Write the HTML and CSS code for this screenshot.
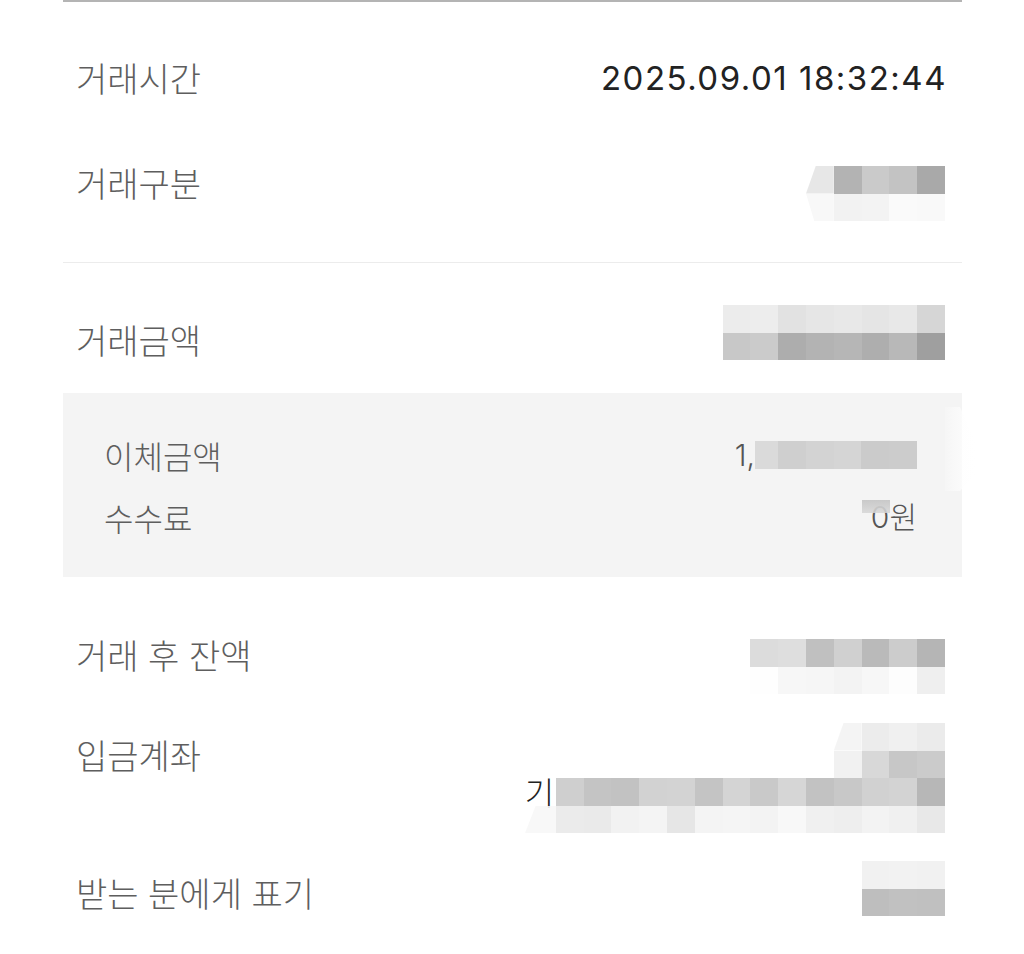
FILE: index.html
```html
<!DOCTYPE html>
<html lang="ko">
<head>
<meta charset="utf-8">
<link rel="stylesheet" href="styles.css">
</head>
<body>
<div class="page">
  <section class="sec sec1">
    <div class="row r1">
      <span class="label">거래시간</span>
      <span class="value date">2025.09.01 18:32:44</span>
    </div>
    <div class="row r2">
      <span class="label">거래구분</span>
      <div class="mosaic m5">
        <i class="smear" style="background:#e4e4e4"></i><i style="background:#b3b3b3"></i><i style="background:#cacaca"></i><i style="background:#c3c3c3"></i><i style="background:#a9a9a9"></i>
        <i class="smear2" style="background:#f8f8f8"></i><i style="background:#f2f2f2"></i><i style="background:#f3f3f3"></i><i style="background:#fafafa"></i><i style="background:#f9f9f9"></i>
      </div>
    </div>
  </section>
  <section class="sec sec2">
    <div class="row r3">
      <span class="label">거래금액</span>
      <div class="mosaic m8">
        <i style="background:#ececec"></i><i style="background:#ededed"></i><i style="background:#e2e2e2"></i><i style="background:#e6e6e6"></i><i style="background:#e8e8e8"></i><i style="background:#e5e5e5"></i><i style="background:#e8e8e8"></i><i style="background:#d6d6d6"></i>
        <i style="background:#c8c8c8"></i><i style="background:#cbcbcb"></i><i style="background:#adadad"></i><i style="background:#b3b3b3"></i><i style="background:#b6b6b6"></i><i style="background:#aeaeae"></i><i style="background:#b8b8b8"></i><i style="background:#9f9f9f"></i>
      </div>
    </div>
    <div class="box">
      <div class="subrow">
        <span class="sublabel">이체금액</span>
        <div class="subvalue">
          <span class="subtext">1,</span>
          <div class="mosaic m6">
            <i style="background:#dadada"></i><i style="background:#cfcfcf"></i><i style="background:#d3d3d3"></i><i style="background:#d5d5d5"></i><i style="background:#cbcbcb"></i><i style="background:#cccccc"></i>
          </div>
        </div>
      </div>
      <div class="subrow">
        <span class="sublabel">수수료</span>
        <div class="subvalue fee">
          <span class="subtext">0원</span>
          <i class="fee-blot"></i>
        </div>
      </div>
      <i class="box-smear"></i>
    </div>
  </section>
  <section class="sec sec3">
    <div class="row r4">
      <span class="label">거래 후 잔액</span>
      <div class="mosaic m7">
        <i style="background:#dcdcdc"></i><i style="background:#dedede"></i><i style="background:#c0c0c0"></i><i style="background:#d0d0d0"></i><i style="background:#bababa"></i><i style="background:#cccccc"></i><i style="background:#b5b5b5"></i>
        <i style="background:#fefefe"></i><i style="background:#f7f7f7"></i><i style="background:#f6f6f6"></i><i style="background:#f3f3f3"></i><i style="background:#f7f7f7"></i><i style="background:#fdfdfd"></i><i style="background:#efefef"></i>
      </div>
    </div>
    <div class="row r5">
      <span class="label">입금계좌</span>
      <div class="mosaic acct">
        <i></i><i></i><i></i><i></i><i></i><i></i><i></i><i></i><i></i><i></i><i></i><i class="smear" style="background:#f3f3f3"></i><i style="background:#ececec"></i><i style="background:#f0f0f0"></i><i style="background:#ebebeb"></i>
        <i></i><i></i><i></i><i></i><i></i><i></i><i></i><i></i><i></i><i></i><i></i><i style="background:#f1f1f1"></i><i style="background:#d8d8d8"></i><i style="background:#c7c7c7"></i><i style="background:#cbcbcb"></i>
        <span class="acct-text">기</span><i style="background:#cfcfcf"></i><i style="background:#c4c4c4"></i><i style="background:#c2c2c2"></i><i style="background:#d2d2d2"></i><i style="background:#d3d3d3"></i><i style="background:#c4c4c4"></i><i style="background:#d4d4d4"></i><i style="background:#c9c9c9"></i><i style="background:#d6d6d6"></i><i style="background:#c2c2c2"></i><i style="background:#c8c8c8"></i><i style="background:#d1d1d1"></i><i style="background:#d3d3d3"></i><i style="background:#b7b7b7"></i>
        <i class="smear" style="background:#f7f7f7"></i><i style="background:#ebebeb"></i><i style="background:#eaeaea"></i><i style="background:#f2f2f2"></i><i style="background:#f4f4f4"></i><i style="background:#e6e6e6"></i><i style="background:#f4f4f4"></i><i style="background:#f5f5f5"></i><i style="background:#f3f3f3"></i><i style="background:#f8f8f8"></i><i style="background:#f0f0f0"></i><i style="background:#eeeeee"></i><i style="background:#f3f3f3"></i><i style="background:#f0f0f0"></i><i style="background:#e8e8e8"></i>
      </div>
    </div>
    <div class="row r6">
      <span class="label">받는 분에게 표기</span>
      <div class="mosaic m3">
        <i style="background:#f1f1f1"></i><i style="background:#f2f2f2"></i><i style="background:#f1f1f1"></i>
        <i style="background:#bebebe"></i><i style="background:#c1c1c1"></i><i style="background:#c0c0c0"></i>
      </div>
    </div>
  </section>
</div>
</body>
</html>
```
FILE: styles.css
```css
html, body {
  margin: 0;
  padding: 0;
  background: #ffffff;
}
body {
  font-family: "Noto Sans CJK KR", "Noto Sans", sans-serif;
  width: 1024px;
  height: 954px;
  overflow: hidden;
}
.page {
  width: 899px;
  margin-left: 63px;
  border-top: 2px solid #b4b4b4;
}
.sec1 {
  padding-top: 24px;
  padding-bottom: 26px;
  border-bottom: 1px solid #ececec;
}
.sec2 {
  padding-top: 25px;
}
.sec3 {
  padding-top: 26px;
}
.row {
  display: flex;
  justify-content: space-between;
  align-items: flex-start;
  padding: 0 17px 0 13px;
}
.label {
  font-size: 34px;
  font-weight: 300;
  line-height: 40px;
  color: #5e5e5e;
  letter-spacing: 0;
}
.value {
  font-family: "Inter", "Noto Sans CJK KR", sans-serif;
  font-size: 33px;
  line-height: 40px;
  color: #222222;
}
.date {
  letter-spacing: 1.5px;
  margin-right: -2px;
}
.r1 { height: 104px; align-items: center; }
.r2 { height: 106px; }
.r2 .label { margin-top: 33px; }
.r2 .mosaic { margin-top: 36px; }
.r3 { height: 105px; }
.r3 .label { margin-top: 32px; }
.r3 .mosaic { margin-top: 17px; }
.r4 { height: 104px; }
.r4 .label { margin-top: 32px; }
.r4 .mosaic { margin-top: 36px; }
.r5 { height: 136px; }
.r5 .label { margin-top: 28px; }
.r5 .mosaic { margin-top: 16px; }
.r6 { height: 100px; }
.r6 .label { margin-top: 30px; }
.r6 .mosaic { margin-top: 18px; }

.mosaic {
  display: grid;
  grid-auto-rows: 27.6px;
}
.mosaic i {
  display: block;
}
.m3 { grid-template-columns: repeat(3, 27.8px); }
.m5 { grid-template-columns: repeat(5, 27.8px); }
.m6 { grid-template-columns: 23px repeat(5, 27.8px); }
.m7 { grid-template-columns: repeat(7, 27.8px); }
.m8 { grid-template-columns: repeat(8, 27.8px); }
.acct {
  grid-template-columns: 31px repeat(14, 27.8px);
}
.acct-text {
  font-size: 32px;
  font-weight: 300;
  line-height: 27.6px;
  color: #222222;
  white-space: nowrap;
}
.smear {
  clip-path: polygon(35% 0, 100% 0, 100% 100%, 0 100%);
  opacity: 0.9;
}
.smear2 {
  clip-path: polygon(0 0, 100% 0, 100% 100%, 30% 100%);
}

.box {
  position: relative;
  background: #f4f4f4;
  padding: 31px 45px 29px 41px;
}
.subrow {
  display: flex;
  justify-content: space-between;
  align-items: center;
  height: 62px;
}
.sublabel {
  font-size: 32px;
  font-weight: 300;
  line-height: 40px;
  color: #5e5e5e;
}
.subvalue {
  display: flex;
  align-items: center;
  position: relative;
}
.subtext {
  font-family: "Inter", "Noto Sans CJK KR", sans-serif;
  font-size: 30px;
  font-weight: 300;
  line-height: 40px;
  color: #555555;
}
.fee-blot {
  position: absolute;
  left: -9px;
  top: 3px;
  width: 28px;
  height: 13px;
  background: linear-gradient(#c9c9c9, rgba(214,214,214,0.85));
}
.box-smear {
  position: absolute;
  right: -13px;
  top: 14px;
  width: 30px;
  height: 84px;
  background: linear-gradient(90deg, rgba(250,250,250,0.3), rgba(255,255,255,0.95));
  clip-path: polygon(0 0, 50% 0, 100% 40%, 100% 80%, 50% 100%, 0 100%);
}
```
